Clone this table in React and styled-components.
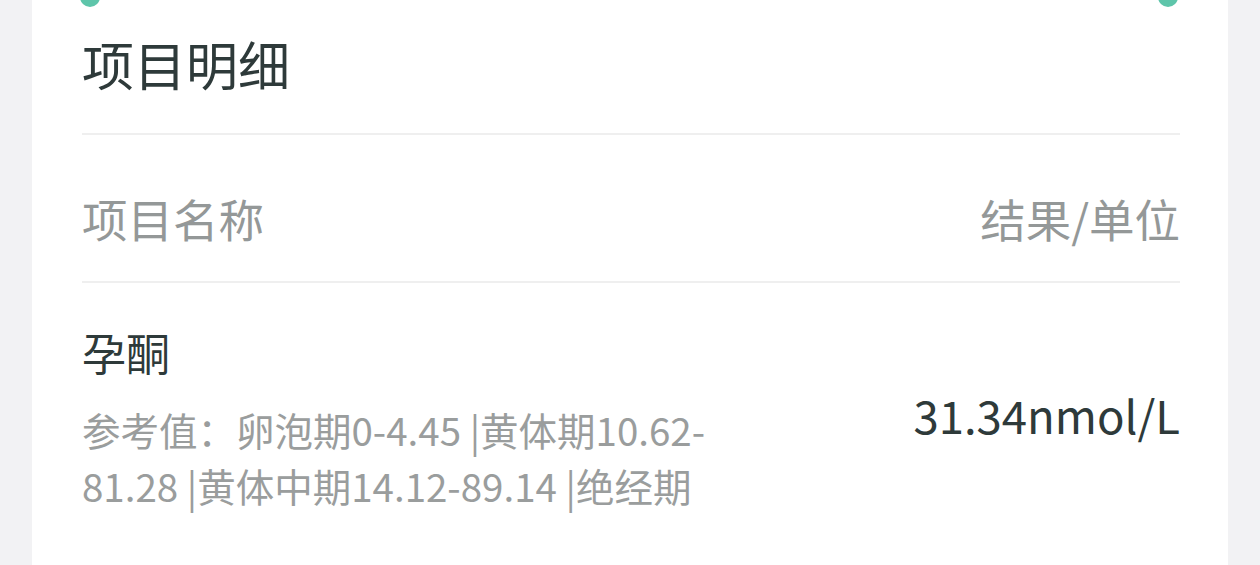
import React from 'react'
import styled, { createGlobalStyle } from "styled-components";

const GlobalStyle = createGlobalStyle`
    body {
        margin: 0;
        background: #f2f2f4;
        font-family: "Noto Sans CJK SC", "Noto Sans", sans-serif;
    }
`;

//----------------------------------------------------------------------

const Page = styled.div`
    width: 1260px;
    height: 565px;
    overflow: hidden;
    padding: 0 32px;
    box-sizing: border-box;
`;
const Card = styled.div`
    position: relative;
    background: #ffffff;
    padding: 0 48px 0 50px;
    height: 565px;
`;
const Hole = styled.span`
    position: absolute;
    top: -13px;
    left: ${props => props.left}px;
    width: 20px;
    height: 20px;
    border-radius: 50%;
    background: #5ec5aa;
`;
const Title = styled.div`
    padding: 29px 0 34px;
    font-size: 52px;
    line-height: 70px;
    color: #2e3a3a;
    border-bottom: 2px solid #efefef;
`;
const Row = styled.div`
    display: flex;
    justify-content: space-between;
    align-items: center;
    padding: ${props => props.padding};
    border-bottom: ${props => props.divider ? "2px solid #efefef" : "none"};
`;
const HeadText = styled.span`
    font-size: 45.5px;
    line-height: 60px;
    color: #949898;
`;
const Left = styled.div`
    display: flex;
    flex-direction: column;
    width: 680px;
`;
const Name = styled.div`
    font-size: 44px;
    line-height: 60px;
    color: #2e3a3a;
    margin-bottom: 19px;
`;
const Ref = styled.div`
    font-size: 38.5px;
    line-height: 56px;
    color: #9a9d9d;
`;
const Value = styled.div`
    font-size: 45.5px;
    line-height: 60px;
    color: #2e3a3a;
    margin-bottom: 8px;
`;

//----------------------------------------------------------------------
export default function App() {
  return (
    <>
        <GlobalStyle />
        <Page>
            <Card>
                <Hole left={48} />
                <Hole left={1126} />
                <Title>项目明细</Title>
                <Row divider padding="53px 0 33px">
                    <HeadText>项目名称</HeadText>
                    <HeadText>结果/单位</HeadText>
                </Row>
                <Row padding="39px 0 0">
                    <Left>
                        <Name>孕酮</Name>
                        <Ref>参考值：卵泡期0-4.45 |黄体期10.62-<br />81.28 |黄体中期14.12-89.14 |绝经期</Ref>
                    </Left>
                    <Value>31.34nmol/L</Value>
                </Row>
            </Card>
        </Page>
    </>
  )
}
